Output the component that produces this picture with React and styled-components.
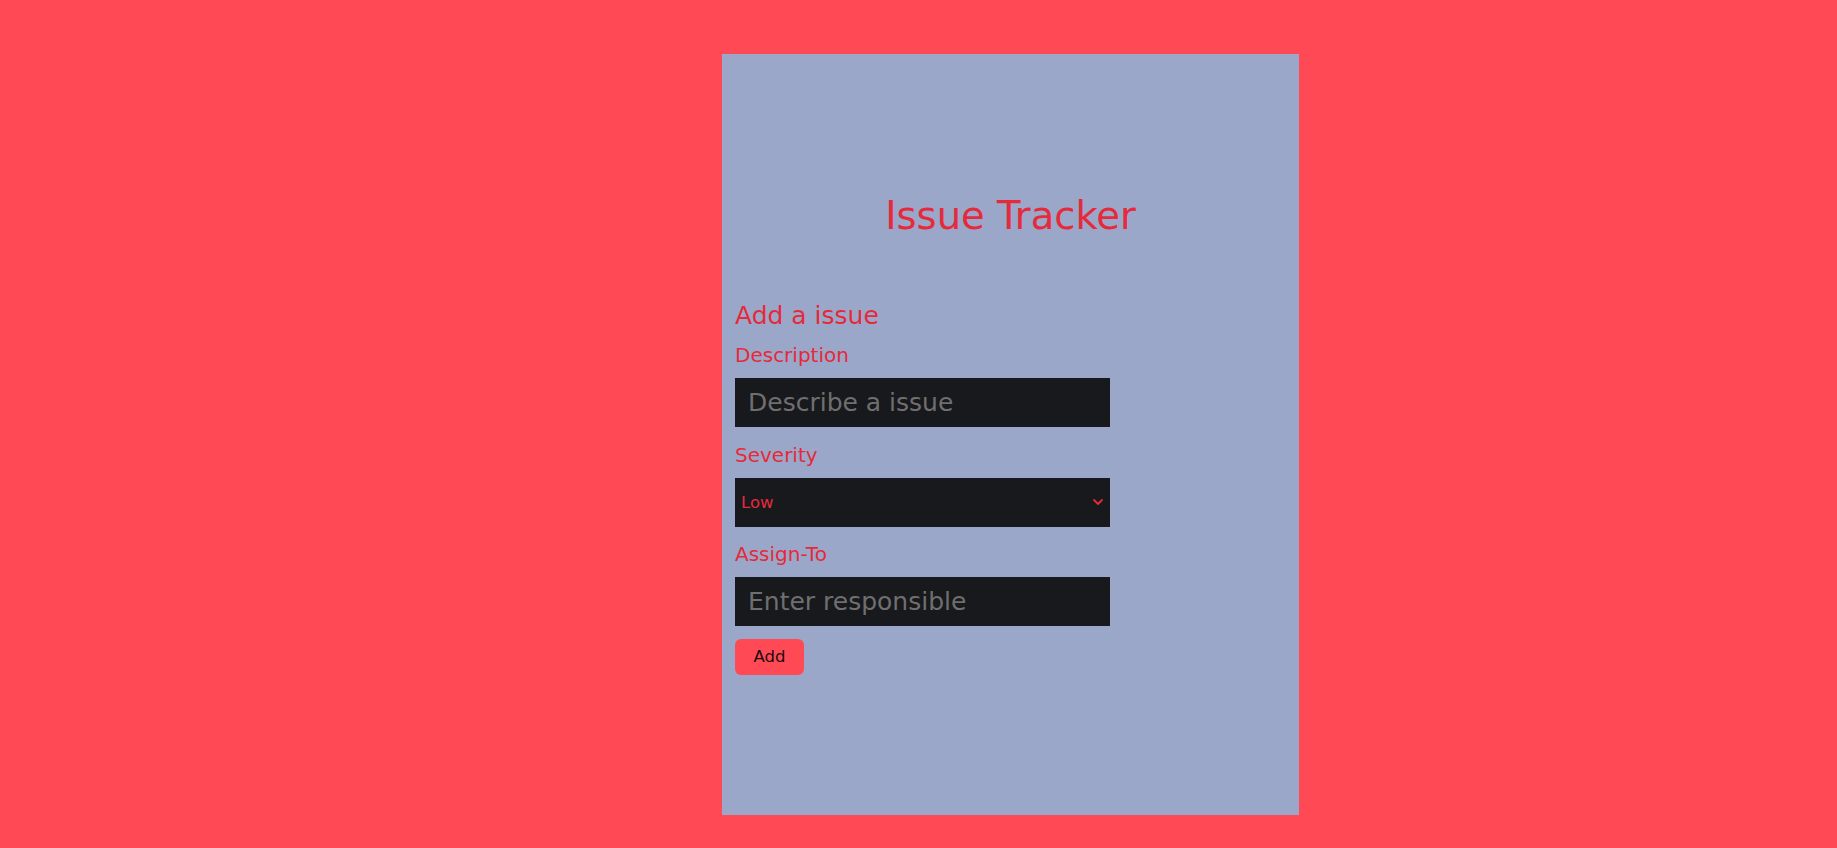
import React, { useState } from 'react'
import styled, { createGlobalStyle } from 'styled-components'

const GlobalStyle = createGlobalStyle`
  html, body {
    margin: 0;
    padding: 0;
    background-color: #ff4a55;
  }
  body {
    font-family: "DejaVu Sans", Verdana, sans-serif;
  }
`

const Page = styled.div`
  min-height: 848px;
  box-sizing: border-box;
  padding: 54px 0 33px 722px;
  display: flex;
  align-items: flex-start;
`

const Panel = styled.main`
  width: 577px;
  height: 761px;
  box-sizing: border-box;
  padding: 139px 13px 0;
  background-color: #9ba7c8;
  display: flex;
  flex-direction: column;
`

const Title = styled.h1`
  margin: 0 0 63px;
  font-size: 38.5px;
  font-weight: 400;
  text-align: center;
  color: #e52a3c;
`

const FormTitle = styled.h2`
  margin: 0 0 13px;
  font-size: 25px;
  font-weight: 400;
  color: #e52a3c;
`

const Form = styled.form`
  display: flex;
  flex-direction: column;
  align-items: flex-start;
`

const Label = styled.label`
  font-size: 20px;
  color: #e52a3c;
  margin-bottom: 11px;
`

const Field = styled.input`
  width: 375px;
  height: 49px;
  box-sizing: border-box;
  margin: 0 0 15.5px;
  padding: 0 13px;
  border: none;
  outline: none;
  background-color: #18191c;
  color: #d8d8d8;
  font-family: "DejaVu Sans", Verdana, sans-serif;
  font-size: 25px;
  &::placeholder {
    color: #6f6f6f;
  }
`

const SelectWrap = styled.div`
  position: relative;
  width: 375px;
  height: 49px;
  margin-bottom: 15.5px;
`

const Select = styled.select`
  appearance: none;
  width: 100%;
  height: 100%;
  box-sizing: border-box;
  padding: 0 6px;
  border: none;
  outline: none;
  background-color: #18191c;
  color: #e52a3c;
  font-family: "DejaVu Sans", Verdana, sans-serif;
  font-size: 16.5px;
  & option {
    color: #e52a3c;
    background-color: #18191c;
  }
`

const Chevron = styled.svg`
  position: absolute;
  right: 7px;
  top: 50%;
  margin-top: -3px;
  width: 10px;
  height: 6px;
  pointer-events: none;
`

const AddButton = styled.button`
  width: 69px;
  height: 36px;
  margin-top: -3px;
  padding: 0;
  border: none;
  border-radius: 6px;
  background-color: #ff4a55;
  color: #1c0a10;
  font-family: "DejaVu Sans", Verdana, sans-serif;
  font-size: 16.5px;
  cursor: pointer;
`

const App = () => {
  const [severity, setSeverity] = useState('Low')

  return (
    <>
      <GlobalStyle />
      <Page>
        <Panel>
          <Title>Issue Tracker</Title>
          <FormTitle>Add a issue</FormTitle>
          <Form onSubmit={(e) => e.preventDefault()}>
            <Label htmlFor="description">Description</Label>
            <Field id="description" type="text" placeholder="Describe a issue" />
            <Label htmlFor="severity">Severity</Label>
            <SelectWrap>
              <Select id="severity" value={severity} onChange={(e) => setSeverity(e.target.value)}>
                <option>Low</option>
                <option>Medium</option>
                <option>High</option>
              </Select>
              <Chevron viewBox="0 0 10 6">
                <path d="M1 1l4 4 4-4" fill="none" stroke="#e52a3c" strokeWidth="1.8" strokeLinecap="round" strokeLinejoin="round" />
              </Chevron>
            </SelectWrap>
            <Label htmlFor="assigned">Assign-To</Label>
            <Field id="assigned" type="text" placeholder="Enter responsible" />
            <AddButton type="submit">Add</AddButton>
          </Form>
        </Panel>
      </Page>
    </>
  )
}

export default App
